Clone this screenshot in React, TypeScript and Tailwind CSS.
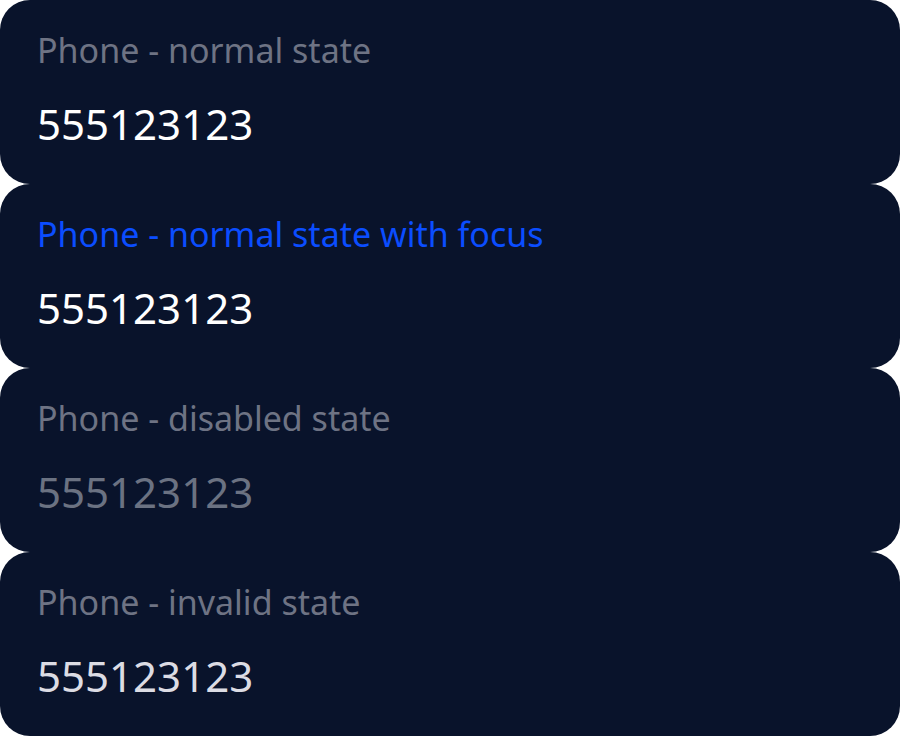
const fields = [
  { label: "Phone - normal state", labelColor: "text-[#6e7384]", valueColor: "text-white" },
  { label: "Phone - normal state with focus", labelColor: "text-[#0b4dff]", valueColor: "text-white" },
  { label: "Phone - disabled state", labelColor: "text-[#6e7384]", valueColor: "text-[#6b7282]" },
  { label: "Phone - invalid state", labelColor: "text-[#6e7384]", valueColor: "text-[#dcdce4]" },
];

export default function App() {
  return (
    <div className="flex w-[900px] flex-col bg-white font-['Noto_Sans',sans-serif]">
      {fields.map((f) => (
        <div
          key={f.label}
          className="flex h-[184px] flex-col rounded-[30px] bg-[#09132b] pl-[37px] pt-[30px]"
        >
          <label className={`text-[34px] leading-[40px] ${f.labelColor}`}>{f.label}</label>
          <div className={`mt-[26px] text-[42px] leading-[56px] ${f.valueColor}`}>555123123</div>
        </div>
      ))}
    </div>
  );
}
